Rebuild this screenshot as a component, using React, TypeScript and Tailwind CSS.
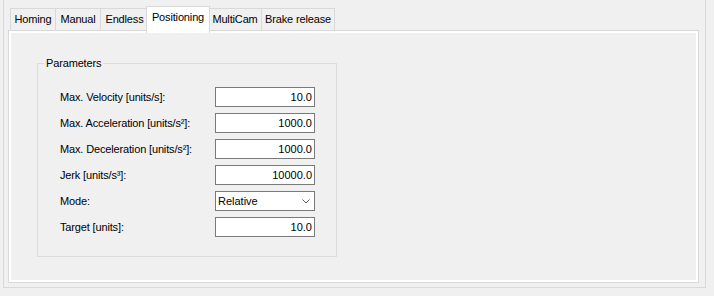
import React from 'react';

const tabs = [
  { label: 'Homing', w: 'w-[45px]' },
  { label: 'Manual', w: 'w-[45px]' },
  { label: 'Endless', w: 'w-[48px]' },
  { label: 'Positioning', w: 'w-[64px]', active: true },
  { label: 'MultiCam', w: 'w-[53px]' },
  { label: 'Brake release', w: 'w-[74px]', last: true },
];

const params = [
  { label: 'Max. Velocity [units/s]:', value: '10.0' },
  { label: 'Max. Acceleration [units/s²]:', value: '1000.0' },
  { label: 'Max. Deceleration [units/s²]:', value: '1000.0' },
  { label: 'Jerk [units/s³]:', value: '10000.0' },
  { label: 'Mode:', value: 'Relative', select: true },
  { label: 'Target [units]:', value: '10.0' },
];

export default function App() {
  return (
    <div className="w-[714px] h-[296px] bg-[#f0f0f0] overflow-hidden text-[11px] leading-[13px] text-black font-['Liberation_Sans',Arial,sans-serif]">
      {/* Outer frame */}
      <div className="ml-[3px] w-[703px] h-[288px] border-x border-b border-[#d9d9d9] pt-[6px]">
        {/* Tab strip */}
        <div className="flex items-end h-[24px] pl-[6px]">
          {tabs.map((t) =>
            t.active ? (
              <div
                key={t.label}
                className={`${t.w} relative z-10 -mx-[2px] -mb-[3px] h-[27px] pb-[5px] flex items-center justify-center bg-white border-x border-t border-[#d9d9d9] tracking-[-0.15px]`}
              >
                {t.label}
              </div>
            ) : (
              <div
                key={t.label}
                className={`${t.w} h-[22px] flex items-center justify-center border-l border-t border-[#d9d9d9] tracking-[-0.15px] ${t.last ? 'border-r' : ''}`}
              >
                {t.label}
              </div>
            )
          )}
        </div>

        {/* Tab page */}
        <div className="ml-[4px] w-[691px] h-[253px] border border-[#d9d9d9]">
          <div className="h-full border-2 border-white pt-[30px] pl-[26px]">
            {/* Group box */}
            <div className="relative w-[300px] h-[194px] border border-[#dcdcdc] pl-[22px] pt-[23px]">
              <span className="absolute left-[6px] -top-[7px] px-[2px] bg-[#f0f0f0] tracking-[-0.15px]">
                Parameters
              </span>
              <div className="flex flex-col gap-[6px]">
                {params.map((p) => (
                  <div key={p.label} className="flex items-center h-[20px]">
                    <div className="w-[155px] tracking-[-0.15px]">{p.label}</div>
                    {p.select ? (
                      <div className="w-[100px] h-[20px] border border-[#7a7a7a] bg-white flex items-center justify-between pl-[2px] pr-[4px]">
                        <span>{p.value}</span>
                        <svg width="8" height="5" viewBox="0 0 8 5" fill="none">
                          <path d="M0.5 0.5 L4 4 L7.5 0.5" stroke="#606060" strokeWidth="1" />
                        </svg>
                      </div>
                    ) : (
                      <div className="w-[100px] h-[20px] border border-[#7a7a7a] bg-white flex items-center justify-end pr-[2px]">
                        {p.value}
                      </div>
                    )}
                  </div>
                ))}
              </div>
            </div>
          </div>
        </div>
      </div>
    </div>
  );
}
